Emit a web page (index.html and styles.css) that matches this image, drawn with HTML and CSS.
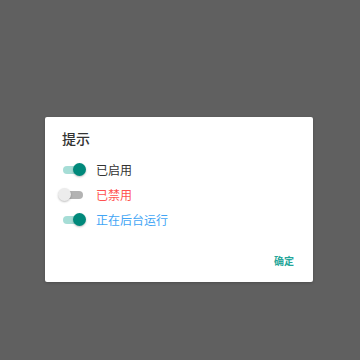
FILE: index.html
```html
<!DOCTYPE html>
<html lang="zh-CN">
<head>
    <meta charset="UTF-8">
    <meta name="viewport" content="width=device-width, initial-scale=1.0">
    <title>提示</title>
    <link rel="stylesheet" href="styles.css">
</head>
<body>
    <div class="dialog">
        <h1 class="title">提示</h1>
        <div class="row">
            <span class="switch on"><span class="thumb"></span></span>
            <span class="label">已启用</span>
        </div>
        <div class="row">
            <span class="switch"><span class="thumb"></span></span>
            <span class="label red">已禁用</span>
        </div>
        <div class="row">
            <span class="switch on"><span class="thumb"></span></span>
            <span class="label blue">正在后台运行</span>
        </div>
        <div class="actions">
            <button>确定</button>
        </div>
    </div>
</body>
</html>
```

FILE: styles.css
```css
html, body { margin: 0; height: 100%; }
body { background: #606060; font-family: Roboto, "Noto Sans CJK SC", sans-serif; display: flex; align-items: flex-start; justify-content: flex-start; }
.dialog { margin: 117px 0 0 45px; width: 268px; height: 165px; box-sizing: border-box; background: #fff; border-radius: 2px; padding: 10px 0 0 17px; box-shadow: 0 1px 3px rgba(0,0,0,0.2); }
.title { margin: 0 0 6px; font-size: 14px; font-weight: 500; color: #333; line-height: 24px; }
.row { display: flex; align-items: center; height: 25px; }
.switch { position: relative; width: 20px; height: 8px; margin-left: 1px; border-radius: 4px; background: #b3b3b3; }
.switch .thumb { position: absolute; top: -3px; left: -5px; width: 13px; height: 13px; border-radius: 50%; background: #ececec; box-shadow: 0 1px 2px rgba(0,0,0,0.25); }
.switch.on { background: #a6ddd6; }
.switch.on .thumb { left: 10px; background: #00897b; }
.label { margin-left: 13px; font-size: 12px; color: #333; }
.red { color: #ff5252; }
.blue { color: #42a5f5; }
.actions { display: flex; justify-content: flex-end; padding: 8px 19px 0 0; margin-top: 13px; }
button { padding: 0; border: none; background: none; font-family: inherit; font-size: 10px; font-weight: bold; color: #26a69a; cursor: pointer; }
```
